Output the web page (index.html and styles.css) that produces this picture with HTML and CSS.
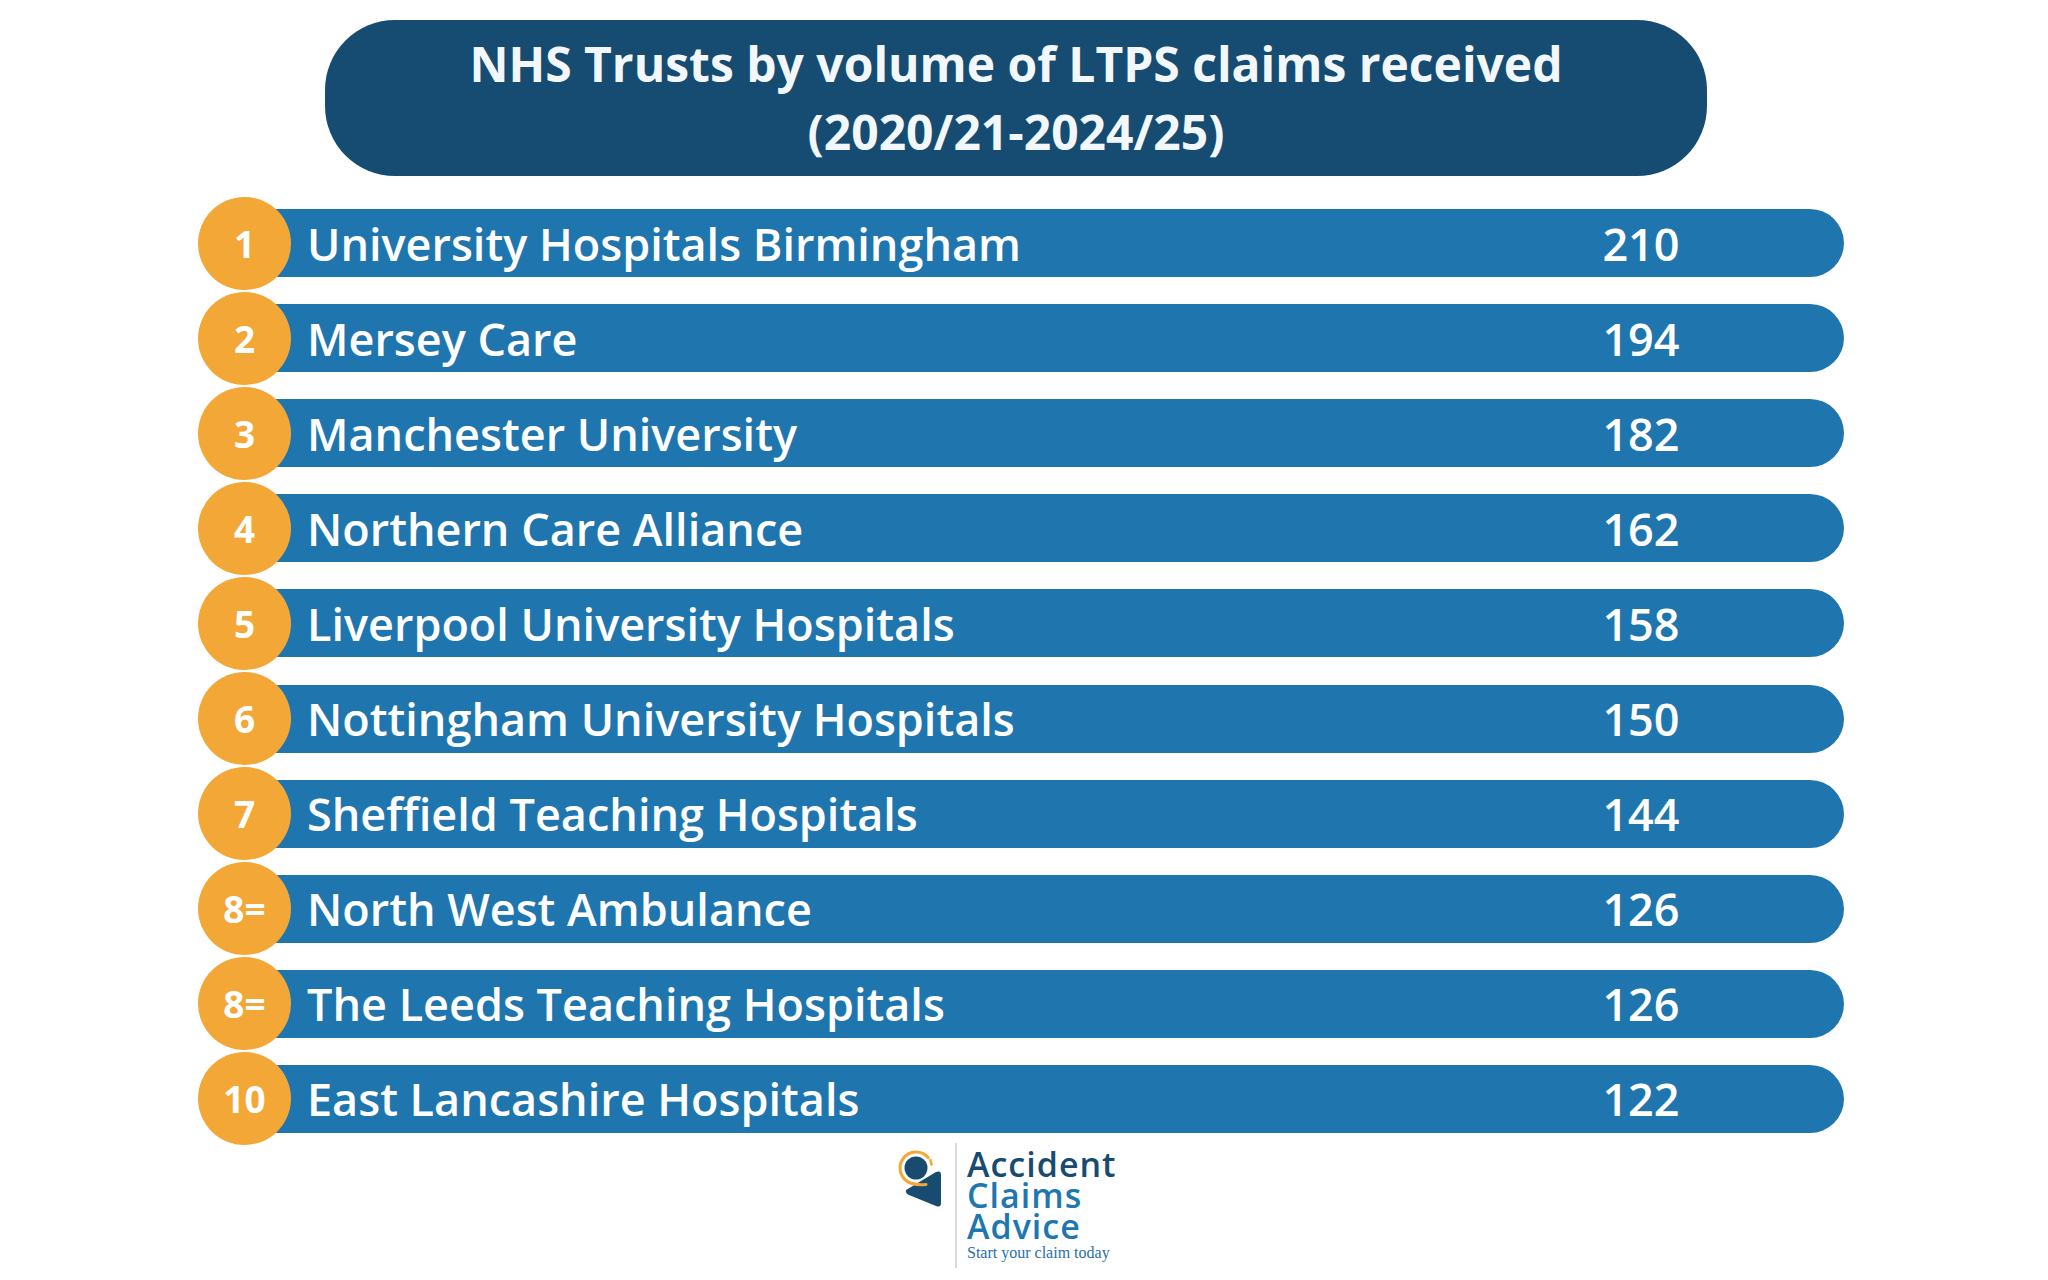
FILE: index.html
```html
<!DOCTYPE html>
<html lang="en">
<head>
<meta charset="utf-8">
<title>NHS Trusts by volume of LTPS claims received</title>
<link rel="stylesheet" href="styles.css">
</head>
<body>
<div class="page">
  <header class="title-box">
    <h1 class="title">NHS Trusts by volume of LTPS claims received<br>(2020/21-2024/25)</h1>
  </header>

  <ol class="ranking">
    <li class="row"><span class="rank">1</span><div class="bar"><span class="name">University Hospitals Birmingham</span><span class="count">210</span></div></li>
    <li class="row"><span class="rank">2</span><div class="bar"><span class="name">Mersey Care</span><span class="count">194</span></div></li>
    <li class="row"><span class="rank">3</span><div class="bar"><span class="name">Manchester University</span><span class="count">182</span></div></li>
    <li class="row"><span class="rank">4</span><div class="bar"><span class="name">Northern Care Alliance</span><span class="count">162</span></div></li>
    <li class="row"><span class="rank">5</span><div class="bar"><span class="name">Liverpool University Hospitals</span><span class="count">158</span></div></li>
    <li class="row"><span class="rank">6</span><div class="bar"><span class="name">Nottingham University Hospitals</span><span class="count">150</span></div></li>
    <li class="row"><span class="rank">7</span><div class="bar"><span class="name">Sheffield Teaching Hospitals</span><span class="count">144</span></div></li>
    <li class="row"><span class="rank">8=</span><div class="bar"><span class="name">North West Ambulance</span><span class="count">126</span></div></li>
    <li class="row"><span class="rank">8=</span><div class="bar"><span class="name">The Leeds Teaching Hospitals</span><span class="count">126</span></div></li>
    <li class="row"><span class="rank">10</span><div class="bar"><span class="name">East Lancashire Hospitals</span><span class="count">122</span></div></li>
  </ol>

  <footer class="logo">
    <svg class="logo-icon" viewBox="0 0 54 65" width="54" height="65" aria-hidden="true">
      <path d="M16 45 L46 27 Q51 25 51 30 L51 58 Q51 63 46 61 L19 50 Q15 48 16 45 Z" fill="#174c70"/>
      <circle cx="26" cy="23" r="11.5" fill="#174c70"/>
      <path d="M38.3 12.7 A16 16 0 1 0 20.5 38 Q28 40.5 36 39.5" fill="none" stroke="#f2a737" stroke-width="3" stroke-linecap="round"/>
      <path d="M40.5 15 L41.5 19.5" fill="none" stroke="#f2a737" stroke-width="2.6" stroke-linecap="round"/>
    </svg>
    <span class="logo-sep"></span>
    <div class="logo-text">
      <span class="logo-word logo-dark">Accident</span>
      <span class="logo-word logo-light">Claims</span>
      <span class="logo-word logo-light">Advice</span>
      <span class="logo-tag">Start your claim today</span>
    </div>
  </footer>
</div>
</body>
</html>
```

FILE: styles.css
```css
html, body {
  margin: 0;
  padding: 0;
  background: #ffffff;
}

.page {
  width: 2048px;
  height: 1280px;
  overflow: hidden;
  font-family: "Open Sans", Lato, "Liberation Sans", sans-serif;
}

.title-box {
  width: 1382px;
  height: 156px;
  margin: 20px 0 0 325px;
  background: #164c71;
  border-radius: 70px;
  display: flex;
  align-items: center;
  justify-content: center;
}

.title {
  margin: 0;
  color: #f2f7fb;
  font-size: 48px;
  font-weight: 700;
  line-height: 68px;
  text-align: center;
}

.ranking {
  list-style: none;
  width: 1646px;
  margin: 19.5px 0 0 198px;
  padding: 0;
}

.row {
  height: 95.1px;
  display: flex;
  align-items: center;
}

.rank {
  position: relative;
  z-index: 1;
  flex: 0 0 93px;
  height: 93px;
  border-radius: 50%;
  background: #f2a737;
  color: #ffffff;
  font-size: 37px;
  font-weight: 700;
  display: flex;
  align-items: center;
  justify-content: center;
}

.bar {
  flex: 1;
  height: 68px;
  margin-left: -47px;
  padding-left: 63px;
  background: #1f76ae;
  border-radius: 0 34px 34px 0;
  display: flex;
  align-items: center;
  color: #ffffff;
  font-size: 45px;
  font-weight: 600;
}

.name {
  flex: 1;
}

.count {
  width: 160px;
  margin-right: 123px;
  text-align: center;
}

.logo {
  display: flex;
  align-items: flex-start;
  margin: -3.5px 0 0 890px;
}

.logo-icon {
  margin-top: 2px;
}

.logo-sep {
  width: 2px;
  height: 125px;
  margin-left: 11px;
  background: #d6dbe0;
}

.logo-text {
  display: flex;
  flex-direction: column;
  margin-left: 10px;
  padding-top: 5.6px;
}

.logo-word {
  font-family: "Open Sans", "Liberation Sans", sans-serif;
  font-weight: 600;
  font-size: 34px;
  line-height: 31px;
  letter-spacing: 1px;
}

.logo-dark {
  color: #174c70;
}

.logo-light {
  color: #1f77b0;
}

.logo-tag {
  margin-top: 2px;
  font-family: "Liberation Serif", serif;
  font-size: 16px;
  line-height: 18px;
  color: #2c6fa8;
}
```
